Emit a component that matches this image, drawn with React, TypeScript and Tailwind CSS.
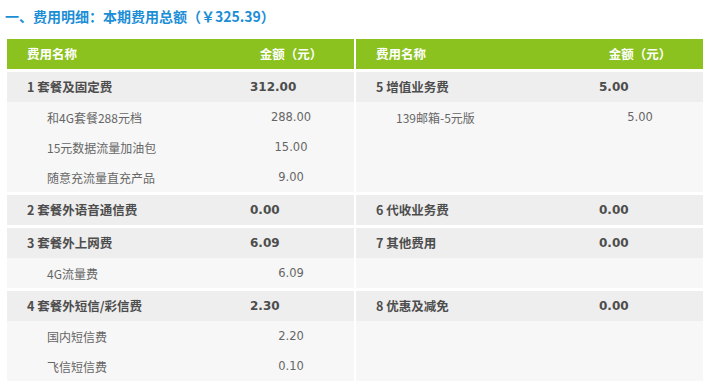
const CN = "font-['Microsoft_YaHei','Noto_Sans_CJK_SC',sans-serif]";
const NUM = "font-['DejaVu_Sans','Noto_Sans_CJK_SC',sans-serif]";

interface Item {
  name: string;
  amount: string;
}

interface Group {
  title: string;
  amount: string;
  items: Item[];
}

const rows: [Group, Group][] = [
  [
    {
      title: "1 套餐及固定费",
      amount: "312.00",
      items: [
        { name: "和4G套餐288元档", amount: "288.00" },
        { name: "15元数据流量加油包", amount: "15.00" },
        { name: "随意充流量直充产品", amount: "9.00" },
      ],
    },
    {
      title: "5 增值业务费",
      amount: "5.00",
      items: [{ name: "139邮箱-5元版", amount: "5.00" }],
    },
  ],
  [
    { title: "2 套餐外语音通信费", amount: "0.00", items: [] },
    { title: "6 代收业务费", amount: "0.00", items: [] },
  ],
  [
    {
      title: "3 套餐外上网费",
      amount: "6.09",
      items: [{ name: "4G流量费", amount: "6.09" }],
    },
    { title: "7 其他费用", amount: "0.00", items: [] },
  ],
  [
    {
      title: "4 套餐外短信/彩信费",
      amount: "2.30",
      items: [
        { name: "国内短信费", amount: "2.20" },
        { name: "飞信短信费", amount: "0.10" },
      ],
    },
    { title: "8 优惠及减免", amount: "0.00", items: [] },
  ],
];

function HeaderCell() {
  return (
    <div className={`flex h-[30px] items-center bg-[#8cc21f] text-[12.5px] font-bold text-white ${CN}`}>
      <span className="w-[243px] pl-5">费用名称</span>
      <span className="w-[82px] text-center">金额（元）</span>
    </div>
  );
}

function GroupCell({ group }: { group: Group }) {
  return (
    <div className="flex flex-col">
      <div className="flex h-[30px] items-center bg-[#eeeeee] text-[#4d4d4d]">
        <span className={`w-[243px] pl-5 text-[12.5px] font-bold ${CN}`}>
          {group.title}
        </span>
        <span className={`text-[12px] font-bold ${NUM}`}>{group.amount}</span>
      </div>
      <div className="flex-1 bg-[#f7f7f7]">
        {group.items.map((it) => (
          <div key={it.name} className="flex h-[30px] items-center pt-[2px] text-[#666666]">
            <span className={`w-[243px] pl-10 text-[12px] ${CN}`}>{it.name}</span>
            <span className={`w-[82px] text-center text-[11.5px] ${NUM}`}>
              {it.amount}
            </span>
          </div>
        ))}
      </div>
    </div>
  );
}

export default function App() {
  return (
    <div className="h-[383px] w-[710px] bg-white">
      <h1
        className={`pl-[5px] pt-[7px] text-[14px] font-bold leading-[18px] text-[#1b8ed6] ${CN}`}
      >
        一、费用明细：本期费用总额（￥325.39）
      </h1>
      <div className="mx-[7px] mt-[14px] flex flex-col gap-[3px]">
        <div className="grid grid-cols-[347px_347px] gap-x-[2px]">
          <HeaderCell />
          <HeaderCell />
        </div>
        {rows.map(([left, right]) => (
          <div key={left.title} className="grid grid-cols-[347px_347px] gap-x-[2px]">
            <GroupCell group={left} />
            <GroupCell group={right} />
          </div>
        ))}
      </div>
    </div>
  );
}
